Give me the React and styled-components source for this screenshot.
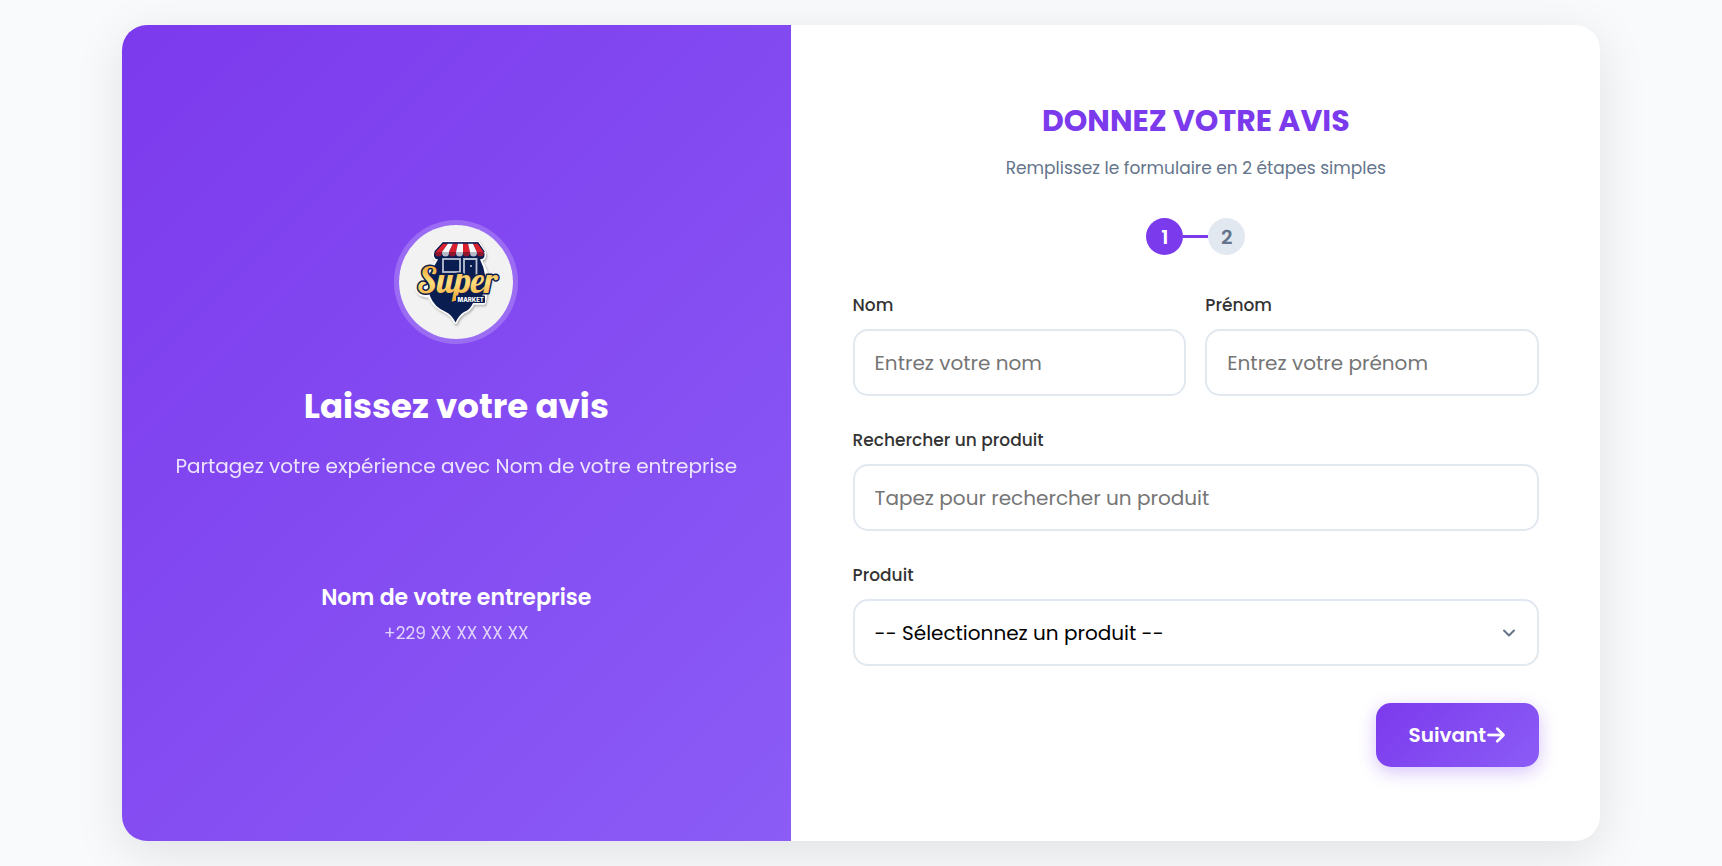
import React from "react";
import styled, { createGlobalStyle } from "styled-components";
import { FaArrowRight } from "react-icons/fa6";
import { ChevronDown } from "lucide-react";

const GlobalStyle = createGlobalStyle`
  *, *::before, *::after { box-sizing: border-box; }
  body {
    margin: 0;
    background: #f8fafc;
    color: #333;
    font-family: Poppins, Inter, "Open Sans", sans-serif;
  }
  button, input, select { font-family: inherit; }
`;

const Page = styled.main`
  display: flex;
  align-items: center;
  justify-content: center;
  min-height: 100vh;
  padding: 24px;
`;

const Card = styled.div`
  display: grid;
  grid-template-columns: 19fr 23fr;
  width: 100%;
  max-width: 1478px;
  border-radius: 25px;
  overflow: hidden;
  background: #fff;
  box-shadow: 0 12px 50px rgba(0, 0, 0, 0.1);

  @media (max-width: 900px) {
    grid-template-columns: 1fr;
  }
`;

const Brand = styled.section`
  display: flex;
  flex-direction: column;
  align-items: center;
  justify-content: center;
  padding: 48px;
  text-align: center;
  color: #fff;
  background: linear-gradient(135deg, #7c3aed, #8b5cf6);
`;

const LogoRing = styled.div`
  width: 124px;
  height: 124px;
  border: 5px solid rgba(255, 255, 255, 0.2);
  border-radius: 50%;
  background: #f2f2f3;
  background-clip: padding-box;

  svg { display: block; width: 100%; height: 100%; }
`;

const BrandTitle = styled.h1`
  margin: 40px 0 0;
  font-size: 34px;
  line-height: 44px;
  font-weight: 700;
`;

const BrandText = styled.p`
  margin: 22px 0 0;
  font-size: 20px;
  line-height: 32px;
  opacity: 0.85;
`;

const Company = styled.h2`
  margin: 100px 0 0;
  font-size: 22px;
  line-height: 32px;
  font-weight: 600;
`;

const Phone = styled.p`
  margin: 6px 0 0;
  font-size: 17px;
  line-height: 26px;
  opacity: 0.75;
`;

const FormPanel = styled.section`
  display: flex;
  flex-direction: column;
  justify-content: center;
  padding: 74px 61px 74px 62px;
`;

const FormTitle = styled.h2`
  margin: 0;
  font-size: 30px;
  line-height: 44px;
  font-weight: 700;
  text-align: center;
  color: #7c3aed;
`;

const FormIntro = styled.p`
  margin: 11px 0 0;
  font-size: 17px;
  line-height: 28px;
  text-align: center;
  color: #64748b;
`;

const Steps = styled.div`
  display: flex;
  align-items: center;
  justify-content: center;
  margin: 36px 0 37px;
`;

const Step = styled.span`
  display: grid;
  place-items: center;
  width: 37px;
  height: 37px;
  border-radius: 50%;
  font-size: 20px;
  font-weight: 600;
  color: ${(p) => (p.$active ? "#fff" : "#64748b")};
  background: ${(p) => (p.$active ? "#7c3aed" : "#e2e8f0")};
`;

const StepLine = styled.span`
  width: 25px;
  height: 3px;
  background: #7c3aed;
`;

const Form = styled.form`
  display: flex;
  flex-direction: column;
  gap: 31px;
`;

const FieldRow = styled.div`
  display: grid;
  grid-template-columns: 1fr 1fr;
  gap: 19px;
`;

const Field = styled.div`
  display: flex;
  flex-direction: column;
  gap: 11px;
  min-width: 0;
`;

const Label = styled.label`
  font-size: 17px;
  line-height: 26px;
  font-weight: 500;
`;

const Input = styled.input`
  width: 100%;
  height: 67px;
  padding: 0 20px;
  border: 2px solid #e2e8f0;
  border-radius: 15px;
  background: #fff;
  font-size: 20px;
  outline: none;

  &::placeholder { color: #757575; opacity: 1; }
  &:focus { border-color: #7c3aed; }
`;

const SelectWrap = styled.div`
  position: relative;

  svg {
    position: absolute;
    top: 50%;
    right: 20px;
    transform: translateY(-50%);
    pointer-events: none;
    color: #64748b;
  }
`;

const Select = styled.select`
  appearance: none;
  width: 100%;
  height: 67px;
  padding: 0 48px 0 20px;
  border: 2px solid #e2e8f0;
  border-radius: 15px;
  background: #fff;
  color: #000;
  font-size: 20px;
  outline: none;

  &:focus { border-color: #7c3aed; }
`;

const Actions = styled.div`
  display: flex;
  justify-content: flex-end;
  padding-top: 6px;
`;

const NextButton = styled.button`
  display: flex;
  align-items: center;
  height: 64px;
  padding: 0 33px;
  border: 0;
  border-radius: 15px;
  color: #fff;
  font-size: 20px;
  font-weight: 600;
  cursor: pointer;
  background: linear-gradient(135deg, #7c3aed, #8b5cf6);
  box-shadow: 0 5px 18px rgba(124, 58, 237, 0.3);

  svg { stroke: currentColor; stroke-width: 6px; }
`;

const AWNING_TOP = [44, 49, 54, 59, 64, 69, 74, 79];
const AWNING_BOTTOM = [36, 43, 50, 57, 64, 71, 78, 85];

function Logo() {
  const silhouette =
    "M44 17.5H79L85.500 28V31Q85 34 81 34.500Q85 42 88 50Q92 55 88 62Q86 72 85 78H74Q71 85 65 87Q60 90 56.500 97.500Q53 90 47 87Q35 82 30 71Q17 70 18 62Q26 60 24 50Q26 42 34 43L39 34.500Q35.500 34 35 31V28Z";
  const body =
    "M44 17.5H79L85.500 28V31Q85 34 81 34.500Q85 42 86 50Q90 62 79 78H74Q71 85 65 87Q60 90 56.500 97.500Q53 90 47 87Q35 82 31 71Q28 60 30 50L39 34.500Q35.500 34 35 31V28Z";
  return (
    <svg viewBox="0 0 114 114" role="img" aria-label="Super Market">
      <defs>
        <linearGradient id="gold" x1="0" y1="0" x2="0" y2="1">
          <stop offset="0.2" stopColor="#f3a93a" />
          <stop offset="0.55" stopColor="#ffdf7d" />
          <stop offset="1" stopColor="#f0a030" />
        </linearGradient>
        <filter id="soft" x="-20%" y="-20%" width="140%" height="150%">
          <feDropShadow dx="1" dy="1.500" stdDeviation="1.200" floodColor="#000" floodOpacity="0.3" />
        </filter>
      </defs>
      <path d={silhouette} fill="#fff" stroke="#fff" strokeWidth="3" strokeLinejoin="round" filter="url(#soft)" />
      <path d={body} fill="#0a1d50" />
      {AWNING_TOP.slice(0, 7).map((x, i) => {
        const next = AWNING_TOP[i + 1];
        const l = AWNING_BOTTOM[i];
        const r = AWNING_BOTTOM[i + 1];
        const red = i % 2 === 0;
        return (
          <g key={x}>
            <path d={`M${x} 18.500H${next}L${r} 27H${l}Z`} fill={red ? "#d9202e" : "#fafafa"} />
            <path d={`M${l} 27H${r}V28a3.500 3.500 0 0 1-7 0Z`} fill={red ? "#8e1730" : "#b4bac8"} />
          </g>
        );
      })}
      <path d="M35.700 27L44 17.800H79L85.300 27" fill="none" stroke="#0a1d50" strokeWidth="1.200" />
      <rect x="44" y="34" width="17" height="13" fill="none" stroke="#bcc3d3" strokeWidth="1.800" />
      <path d="M65 50V34H77.500V50" fill="none" stroke="#bcc3d3" strokeWidth="1.800" />
      <circle cx="72" cy="41" r="0.900" fill="#e8ebf2" />
      <text
        x="18"
        y="68"
        fontFamily='Lobster, "Liberation Serif", serif'
        fontSize="35"
        fill="url(#gold)"
        stroke="#0a1d50"
        strokeWidth="3"
        strokeLinejoin="round"
        paintOrder="stroke"
      >
        Super
      </text>
      <rect x="57" y="70.500" width="29" height="7.500" rx="1" fill="#0a1d50" />
      <text x="58.500" y="76.500" fill="#fff" fontFamily="Inter, sans-serif" fontSize="6" fontWeight="800">
        MARKET
      </text>
    </svg>
  );
}

export default function App() {
  return (
    <>
      <GlobalStyle />
      <Page>
        <Card>
          <Brand>
            <LogoRing>
              <Logo />
            </LogoRing>
            <BrandTitle>Laissez votre avis</BrandTitle>
            <BrandText>Partagez votre expérience avec Nom de votre entreprise</BrandText>
            <Company>Nom de votre entreprise</Company>
            <Phone>+229 XX XX XX XX</Phone>
          </Brand>
          <FormPanel>
            <FormTitle>DONNEZ VOTRE AVIS</FormTitle>
            <FormIntro>Remplissez le formulaire en 2 étapes simples</FormIntro>
            <Steps>
              <Step $active>1</Step>
              <StepLine />
              <Step>2</Step>
            </Steps>
            <Form onSubmit={(e) => e.preventDefault()}>
              <FieldRow>
                <Field>
                  <Label htmlFor="nom">Nom</Label>
                  <Input id="nom" type="text" placeholder="Entrez votre nom" />
                </Field>
                <Field>
                  <Label htmlFor="prenom">Prénom</Label>
                  <Input id="prenom" type="text" placeholder="Entrez votre prénom" />
                </Field>
              </FieldRow>
              <Field>
                <Label htmlFor="recherche">Rechercher un produit</Label>
                <Input id="recherche" type="text" placeholder="Tapez pour rechercher un produit" />
              </Field>
              <Field>
                <Label htmlFor="produit">Produit</Label>
                <SelectWrap>
                  <Select id="produit" defaultValue="">
                    <option value="">-- Sélectionnez un produit --</option>
                  </Select>
                  <ChevronDown size={20} strokeWidth={2.4} aria-hidden="true" />
                </SelectWrap>
              </Field>
              <Actions>
                <NextButton type="submit">
                  Suivant
                  <FaArrowRight size={20} aria-hidden="true" />
                </NextButton>
              </Actions>
            </Form>
          </FormPanel>
        </Card>
      </Page>
    </>
  );
}
